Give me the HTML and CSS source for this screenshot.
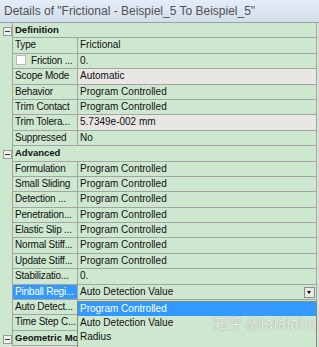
FILE: index.html
```html
<!DOCTYPE html>
<html>
<head>
<meta charset="utf-8" />
<title>Details</title>
<link rel="stylesheet" href="styles.css">
</head>
<body>
<div class="panel">
    <div class="title">Details of "Frictional - Beispiel_5 To Beispiel_5"</div>
    <div class="grid">
        <div class="row group"><span class="gutter"><i class="toggle"></i></span><span class="head">Definition</span></div>
        <div class="row"><span class="gutter"></span><span class="name">Type</span><span class="value">Frictional</span></div>
        <div class="row"><span class="gutter"></span><span class="name"><i class="check"></i>Friction ...</span><span class="value">0.</span></div>
        <div class="row"><span class="gutter"></span><span class="name">Scope Mode</span><span class="value grey">Automatic</span></div>
        <div class="row"><span class="gutter"></span><span class="name">Behavior</span><span class="value">Program Controlled</span></div>
        <div class="row"><span class="gutter"></span><span class="name">Trim Contact</span><span class="value">Program Controlled</span></div>
        <div class="row"><span class="gutter"></span><span class="name">Trim Tolera...</span><span class="value grey">5.7349e-002 mm</span></div>
        <div class="row"><span class="gutter"></span><span class="name">Suppressed</span><span class="value">No</span></div>
        <div class="row group"><span class="gutter"><i class="toggle"></i></span><span class="head">Advanced</span></div>
        <div class="row"><span class="gutter"></span><span class="name">Formulation</span><span class="value">Program Controlled</span></div>
        <div class="row"><span class="gutter"></span><span class="name">Small Sliding</span><span class="value">Program Controlled</span></div>
        <div class="row"><span class="gutter"></span><span class="name">Detection ...</span><span class="value">Program Controlled</span></div>
        <div class="row"><span class="gutter"></span><span class="name">Penetration...</span><span class="value">Program Controlled</span></div>
        <div class="row"><span class="gutter"></span><span class="name">Elastic Slip ...</span><span class="value">Program Controlled</span></div>
        <div class="row"><span class="gutter"></span><span class="name">Normal Stiff...</span><span class="value">Program Controlled</span></div>
        <div class="row"><span class="gutter"></span><span class="name">Update Stiff...</span><span class="value">Program Controlled</span></div>
        <div class="row"><span class="gutter"></span><span class="name">Stabilizatio...</span><span class="value">0.</span></div>
        <div class="row"><span class="gutter"></span><span class="name selected">Pinball Regi...</span><span class="value combo">Auto Detection Value<i class="drop"></i></span></div>
        <div class="row"><span class="gutter"></span><span class="name">Auto Detect...</span><span class="value"></span></div>
        <div class="row"><span class="gutter"></span><span class="name">Time Step C...</span><span class="value"></span></div>
        <div class="row group"><span class="gutter"><i class="toggle"></i></span><span class="head"><span class="clip">Geometric Mo</span></span></div>

        <ul class="list">
            <li class="on">Program Controlled</li>
            <li>Auto Detection Value</li>
            <li>Radius</li>
        </ul>
        <div class="mark">知乎 @lalalahu</div>
    </div>
</div>
</body>
</html>
```

FILE: styles.css
```css
*{ margin:0; padding:0;}
body{ width:319px; height:347px; overflow:hidden; background:#d9e4d9; font-family:"Liberation Sans", Arial, sans-serif; font-size:10px; color:#111;}
.panel{ width:319px;}
.title{ height:22px; line-height:22px; padding-left:4px; font-size:12px; color:#505050; background:linear-gradient(#e4ecf6, #d3deec); border-bottom:1px solid #9aa3ad; white-space:nowrap; overflow:hidden;}
.grid{ position:relative; width:317px; background:#cde8cf;}
.row{ display:grid; grid-template-columns:12px 65px 1fr; height:15.4px; line-height:14px;}
.name,.value,.head{ border-left:1px solid #a2a6a2; border-bottom:1px solid #a2a6a2; padding-left:2px; white-space:nowrap; overflow:hidden;}
.name{ letter-spacing:-0.2px;}
.value,.head{ border-right:1px solid #a2a6a2;}
.head{ grid-column:2 / 4; font-weight:bold; font-size:9.5px;}
.clip{ display:inline-block; width:62px; overflow:hidden; vertical-align:top;}
.grey{ background:#e9e7e3;}
.gutter{ position:relative;}
.toggle{ position:absolute; left:3px; top:4px; width:7px; height:7px; border:1px solid #9a9a9a; background:#eef2ee;}
.toggle:after{ content:''; position:absolute; left:1px; top:3px; width:5px; height:1px; background:#333;}
.check{ display:inline-block; width:8px; height:8px; border:1px solid #b8b8b8; background:#fff; vertical-align:-1px; margin:0 5px 0 1px;}
.selected{ background:#3399ff; color:#fff;}
.combo{ position:relative;}
.drop{ position:absolute; right:1px; top:2px; width:9px; height:9px; border:1px solid #8c8c8c; background:#e8e8e8;}
.drop:after{ content:''; position:absolute; left:2px; top:3px; border-left:2.5px solid transparent; border-right:2.5px solid transparent; border-top:3px solid #000;}
.list{ position:absolute; left:77px; top:278px; width:238px; height:50px; list-style:none; background:#cde8cf; border:1px solid #7f8a80; border-bottom:none;}
.list li{ height:14px; line-height:14px; padding-left:2px;}
.list .on{ background:#3399ff; color:#fff;}
.mark{ position:absolute; left:213px; top:289px; font-family:"Noto Sans CJK SC", "Liberation Sans", sans-serif; font-size:15px; color:rgba(255,255,255,0.85); text-shadow:0 0 1px rgba(80,80,80,0.7); white-space:nowrap;}
```
